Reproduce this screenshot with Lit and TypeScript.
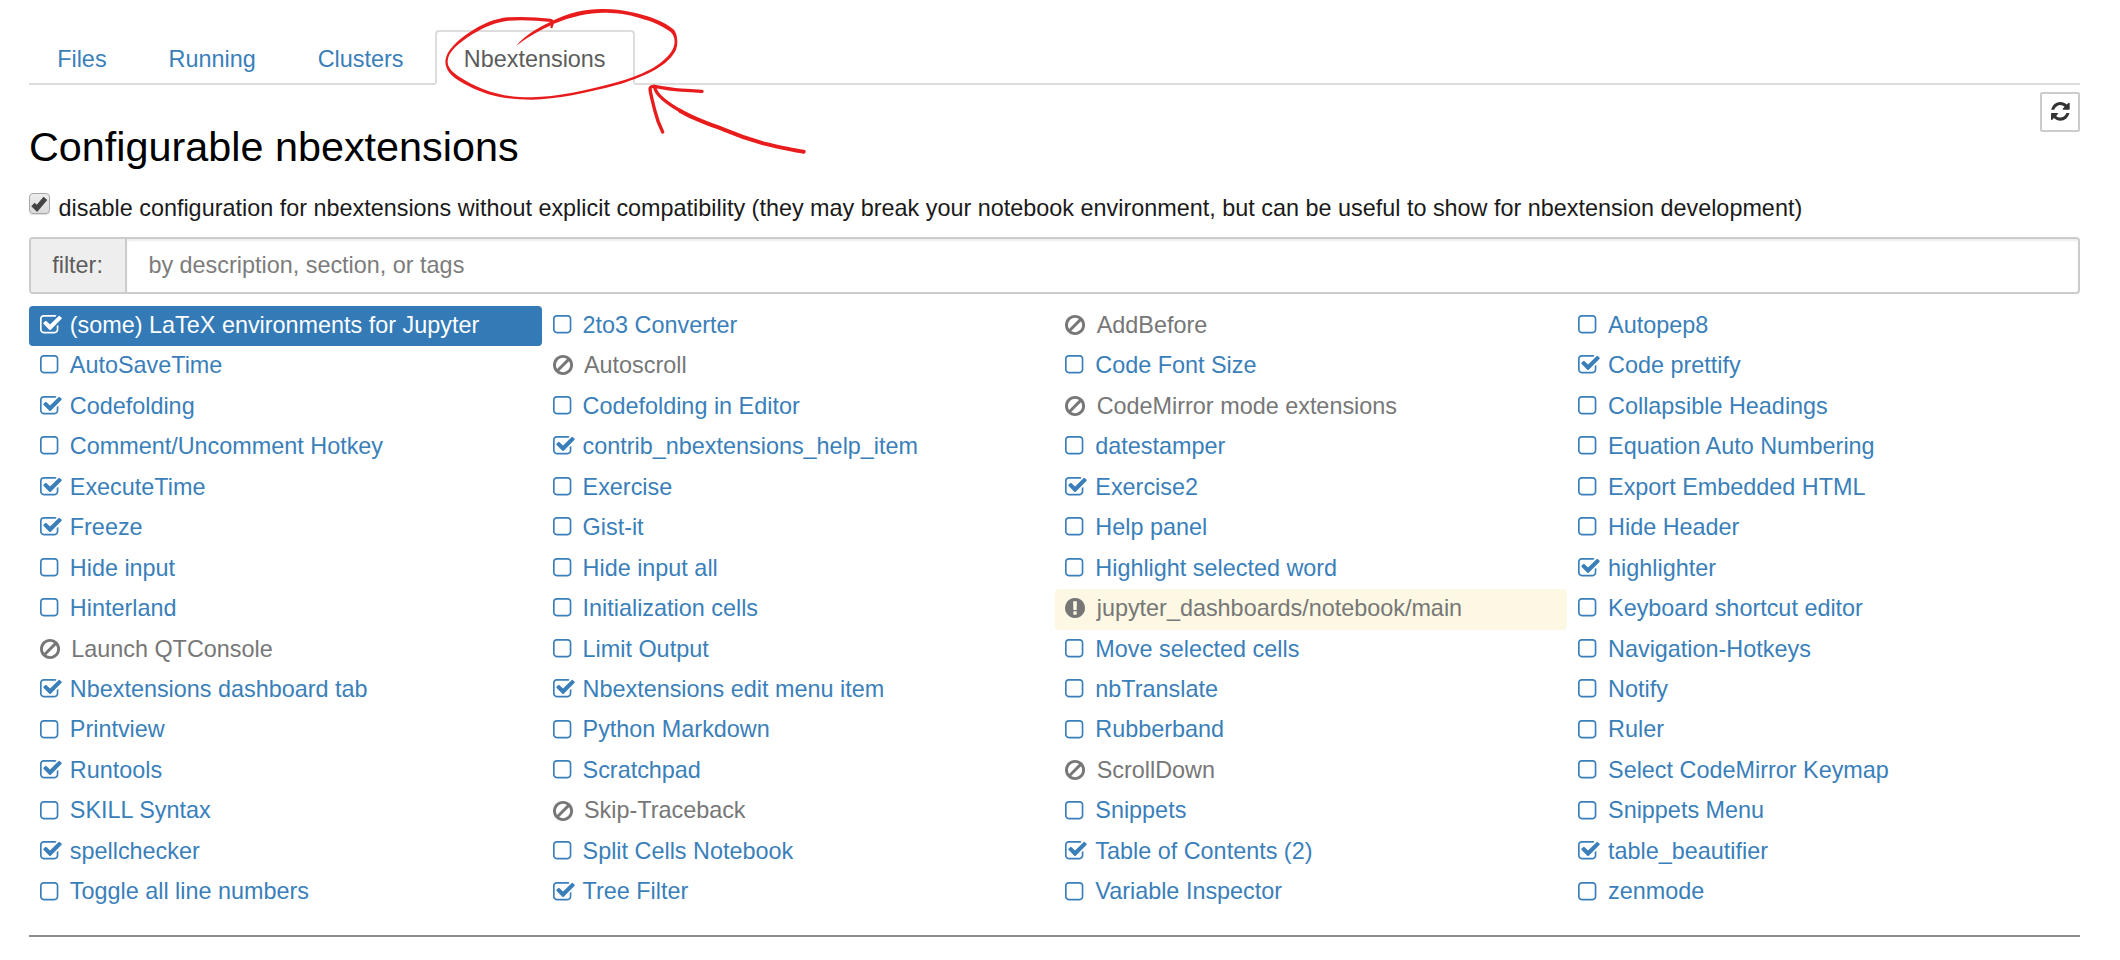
import { LitElement, html, css, svg } from "lit";
import { customElement, property } from "lit/decorators.js";
import { classMap } from "lit/directives/class-map.js";

type State = "on" | "off" | "ban" | "warn";

// Each glyph sits on a 1792-unit em; the view box starts at the glyph's left edge.
const GLYPHS: Record<string, { x: number; d: string }> = {
  on: {
    x: 64,
    d: "M1472 930v318q0 119-84.5 203.5t-203.5 84.5h-832q-119 0-203.5-84.5t-84.5-203.5v-832q0-119 84.5-203.5t203.5-84.5h832q63 0 117 25 15 7 18 23 3 17-9 29l-49 49q-10 10-23 10-3 0-9-2-23-6-45-6h-832q-66 0-113 47t-47 113v832q0 66 47 113t113 47h832q66 0 113-47t47-113v-254q0-13 9-22l64-64q10-10 23-10 6 0 12 3 20 8 20 29zm231-489l-814 814q-24 24-57 24t-57-24l-430-430q-24-24-24-57t24-57l110-110q24-24 57-24t57 24l263 263 647-647q24-24 57-24t57 24l110 110q24 24 24 57t-24 57z",
  },
  off: {
    x: 192,
    d: "M1312 256h-832q-66 0-113 47t-47 113v832q0 66 47 113t113 47h832q66 0 113-47t47-113v-832q0-66-47-113t-113-47zm288 160v832q0 119-84.5 203.5t-203.5 84.5h-832q-119 0-203.5-84.5t-84.5-203.5v-832q0-119 84.5-203.5t203.5-84.5h832q119 0 203.5 84.5t84.5 203.5z",
  },
  ban: {
    x: 128,
    d: "M1440 893q0-161-87-295l-754 753q137 89 297 89 111 0 211.5-43.5t173.5-116.5 116-174.5 43-212.5zm-999 299l755-754q-135-91-300-91-148 0-273 73t-198 199-73 274q0 162 89 299zm1223-299q0 157-61 300t-163.5 246-245 164-298.5 61-298.5-61-245-164-163.5-246-61-300 61-299.5 163.5-245.5 245-164 298.5-61 298.5 61 245 164 163.5 245.5 61 299.5z",
  },
  warn: {
    x: 128,
    d: "M896 128q209 0 385.5 103t279.5 279.5 103 385.5-103 385.5-279.5 279.5-385.5 103-385.5-103-279.5-279.5-103-385.5 103-385.5 279.5-279.5 385.5-103zm128 1247v-190q0-14-9-23.5t-22-9.5h-192q-13 0-23 10t-10 23v188q0 13 10 23t23 10h192q13 0 22-9.5t9-23.5zm-2-344l18-621q0-12-10-18-10-8-24-8h-220q-14 0-24 8-10 6-10 18l17 621q0 10 10 17.5t24 7.5h185q14 0 23.5-7.5t10.5-17.5z",
  },
  refresh: {
    x: 128,
    d: "M1639 1056q0 5-1 7-64 268-268 434.5t-478 166.5q-146 0-282.5-55t-243.5-157l-129 129q-19 19-45 19t-45-19-19-45v-448q0-26 19-45t45-19h448q26 0 45 19t19 45-19 45l-137 137q71 66 161 102t187 36q134 0 250-65t186-179q11-17 53-117 8-23 30-23h192q13 0 22.5 9.5t9.5 22.5zm25-800v448q0 26-19 45t-45 19h-448q-26 0-45-19t-19-45 19-45l138-138q-148-137-349-137-134 0-250 65t-186 179q-11 17-53 117-8 23-30 23h-199q-13 0-22.5-9.5t-9.5-22.5v-7q65-268 270-434.5t480-166.5q146 0 284 55.5t245 156.5l130-129q19-19 45-19t45 19 19 45z",
  },
};

const EXTENSIONS: [State, string][] = [
  ["on", "(some) LaTeX environments for Jupyter"], ["off", "2to3 Converter"], ["ban", "AddBefore"], ["off", "Autopep8"],
  ["off", "AutoSaveTime"], ["ban", "Autoscroll"], ["off", "Code Font Size"], ["on", "Code prettify"],
  ["on", "Codefolding"], ["off", "Codefolding in Editor"], ["ban", "CodeMirror mode extensions"], ["off", "Collapsible Headings"],
  ["off", "Comment/Uncomment Hotkey"], ["on", "contrib_nbextensions_help_item"], ["off", "datestamper"], ["off", "Equation Auto Numbering"],
  ["on", "ExecuteTime"], ["off", "Exercise"], ["on", "Exercise2"], ["off", "Export Embedded HTML"],
  ["on", "Freeze"], ["off", "Gist-it"], ["off", "Help panel"], ["off", "Hide Header"],
  ["off", "Hide input"], ["off", "Hide input all"], ["off", "Highlight selected word"], ["on", "highlighter"],
  ["off", "Hinterland"], ["off", "Initialization cells"], ["warn", "jupyter_dashboards/notebook/main"], ["off", "Keyboard shortcut editor"],
  ["ban", "Launch QTConsole"], ["off", "Limit Output"], ["off", "Move selected cells"], ["off", "Navigation-Hotkeys"],
  ["on", "Nbextensions dashboard tab"], ["on", "Nbextensions edit menu item"], ["off", "nbTranslate"], ["off", "Notify"],
  ["off", "Printview"], ["off", "Python Markdown"], ["off", "Rubberband"], ["off", "Ruler"],
  ["on", "Runtools"], ["off", "Scratchpad"], ["ban", "ScrollDown"], ["off", "Select CodeMirror Keymap"],
  ["off", "SKILL Syntax"], ["ban", "Skip-Traceback"], ["off", "Snippets"], ["off", "Snippets Menu"],
  ["on", "spellchecker"], ["off", "Split Cells Notebook"], ["on", "Table of Contents (2)"], ["on", "table_beautifier"],
  ["off", "Toggle all line numbers"], ["on", "Tree Filter"], ["off", "Variable Inspector"], ["off", "zenmode"],
];

@customElement("fa-icon")
class FaIcon extends LitElement {
  @property() name = "off";
  static styles = css`
    :host { display: block; width: 1em; height: 1em; }
    svg { display: block; width: 100%; height: 100%; fill: currentColor; overflow: visible; }
  `;
  render() {
    const g = GLYPHS[this.name];
    return html`<svg viewBox="${g.x} 128 1792 1792">${svg`<path d=${g.d}></path>`}</svg>`;
  }
}

@customElement("ext-item")
class ExtItem extends LitElement {
  @property() state: State = "off";
  @property() label = "";
  @property({ type: Boolean }) selected = false;
  static styles = css`
    :host { display: block; height: 40.48px; }
    .row {
      display: flex; height: 100%; box-sizing: border-box; padding-left: 10.8px;
      border-radius: 4px; color: #3a7fba; line-height: 39px; white-space: nowrap;
    }
    .icon { flex: none; width: 30px; padding-top: 9.2px; }
    .ban, .warn { color: #777; }
    .ban .icon, .warn .icon { width: 31.4px; }
    .warn { background: #fcf8e3; }
    .selected { background: #337ab7; color: #fff; }
  `;
  render() {
    return html`<div class=${classMap({ row: true, [this.state]: true, selected: this.selected })}>
      <div class="icon"><fa-icon name=${this.state}></fa-icon></div>
      <span>${this.label}</span>
    </div>`;
  }
}

@customElement("app-root")
class AppRoot extends LitElement {
  static styles = css`
    :host {
      display: block; position: relative; box-sizing: border-box; width: 2120px; height: 960px;
      padding: 30px 40px 0 29px; background: #fff; color: #000; overflow: hidden;
      font: 23.4px/33.4px "Liberation Sans", Arial, sans-serif;
    }
    .tabs { display: flex; gap: 3.6px; height: 54.5px; box-sizing: border-box; border-bottom: 2px solid #ddd; }
    .tab {
      box-sizing: border-box; height: 54.5px; padding: 11px 28.2px 0 26.2px; border: 2px solid transparent;
      line-height: 33px; color: #3a7fba; border-radius: 4px 4px 0 0;
    }
    .tab.active {
      margin-left: -2.6px; padding-left: 27.2px; padding-right: 27.2px;
      color: #5c5c5c; background: #fff; border-color: #ddd; border-bottom-color: #fff;
    }
    .head { display: flex; justify-content: space-between; height: 95.5px; }
    h1 { margin: 39px 0 0; font-size: 41.35px; line-height: 46px; font-weight: 500; }
    .refresh {
      box-sizing: border-box; width: 40px; height: 40px; margin-top: 7px; padding: 8px 0 0 9px;
      border: 2px solid #ccc; border-radius: 2px; color: #333; font-size: 21.8px;
    }
    .option { display: flex; height: 56.7px; }
    .check {
      box-sizing: border-box; width: 21px; height: 21px; margin: 12.5px 8.6px 0 0;
      border: 1.6px solid #a8a8a8; border-radius: 4px; background: linear-gradient(#ececec, #dcdcdc);
      box-shadow: 0 1px 1px #ddd;
    }
    .check svg { display: block; width: 100%; height: 100%; overflow: visible; }
    .option span { line-height: 33px; padding-top: 12px; color: #1a1a1a; }
    .filter {
      display: flex; box-sizing: border-box; height: 57px; border: 2px solid #ccc; border-radius: 4px;
      line-height: 53px; overflow: hidden;
    }
    .addon { box-sizing: border-box; width: 96px; padding-left: 21.2px; background: #eee; color: #5c5c5c; border-right: 2px solid #ccc; }
    .input { flex: 1; padding-left: 21.4px; color: #7c7c7c; box-shadow: inset 0 2px 2px rgba(0, 0, 0, 0.075); }
    .grid { display: grid; grid-template-columns: repeat(4, 1fr); margin-top: 12.1px; }
    .rule { height: 2px; margin-top: 22.6px; background: #8c8c8c; }
    .marks { position: absolute; left: 420px; top: 0; width: 400px; height: 170px; fill: none; stroke: #e81c1c; stroke-linecap: round; stroke-linejoin: round; }
  `;

  render() {
    return html`
      <div class="tabs">
        <div class="tab">Files</div>
        <div class="tab">Running</div>
        <div class="tab">Clusters</div>
        <div class="tab active">Nbextensions</div>
      </div>
      <div class="head">
        <h1>Configurable nbextensions</h1>
        <div class="refresh"><fa-icon name="refresh"></fa-icon></div>
      </div>
      <div class="option">
        <div class="check">
          <svg viewBox="0 0 18 18"><path d="M2.8 10L6.6 13.6L14.6 4.2" fill="none" stroke="#444" stroke-width="4.6"></path></svg>
        </div>
        <span>disable configuration for nbextensions without explicit compatibility (they may break your notebook environment, but can be useful to show for nbextension development)</span>
      </div>
      <div class="filter">
        <div class="addon">filter:</div>
        <div class="input">by description, section, or tags</div>
      </div>
      <div class="grid">
        ${EXTENSIONS.map(([state, label], i) => html`<ext-item .state=${state} .label=${label} ?selected=${i === 0}></ext-item>`)}
      </div>
      <div class="rule"></div>
      <svg class="marks" viewBox="0 0 1200 510">
        <path stroke="none" fill="#e81c1c" d="M289 137C315 106 345 88 392 65C450 35 505 26 550 27C585 27 615 31 650 40C695 51 735 67 760 88C775 102 775 140 765 155C735 205 665 232 590 255C500 279 410 298 335 299C250 298 200 285 150 260C105 239 76 218 76 184C78 150 115 120 150 96C185 73 225 55 265 52Q330 49 392 56Q404 58 401 73L397 85L391 84L393 66Q330 59 265 62C228 66 190 82 157 103C120 127 83 155 83 184C82 211 113 229 155 252C205 277 255 292 335 292C410 291 500 271 590 247C660 227 729 198 757 150C768 130 765 108 752 96C720 71 682 60 645 50C610 40 580 38 550 38C510 38 453 49 400 72C360 91 325 110 289 137Z"></path>
        <path stroke-width="10" d="M728 396C720 380 710 355 704 330C698 304 692 285 690 267Q690 258 704 259"></path>
        <path stroke-width="10" d="M702 259C735 264 760 270 800 271L846 274"></path>
        <path stroke-width="10" d="M704 262C707 284 740 310 790 338"></path>
        <path stroke-width="12" d="M780 332C820 356 870 373 910 388C950 405 990 419 1030 430C1080 442 1115 450 1151 455"></path>
      </svg>
    `;
  }
}
